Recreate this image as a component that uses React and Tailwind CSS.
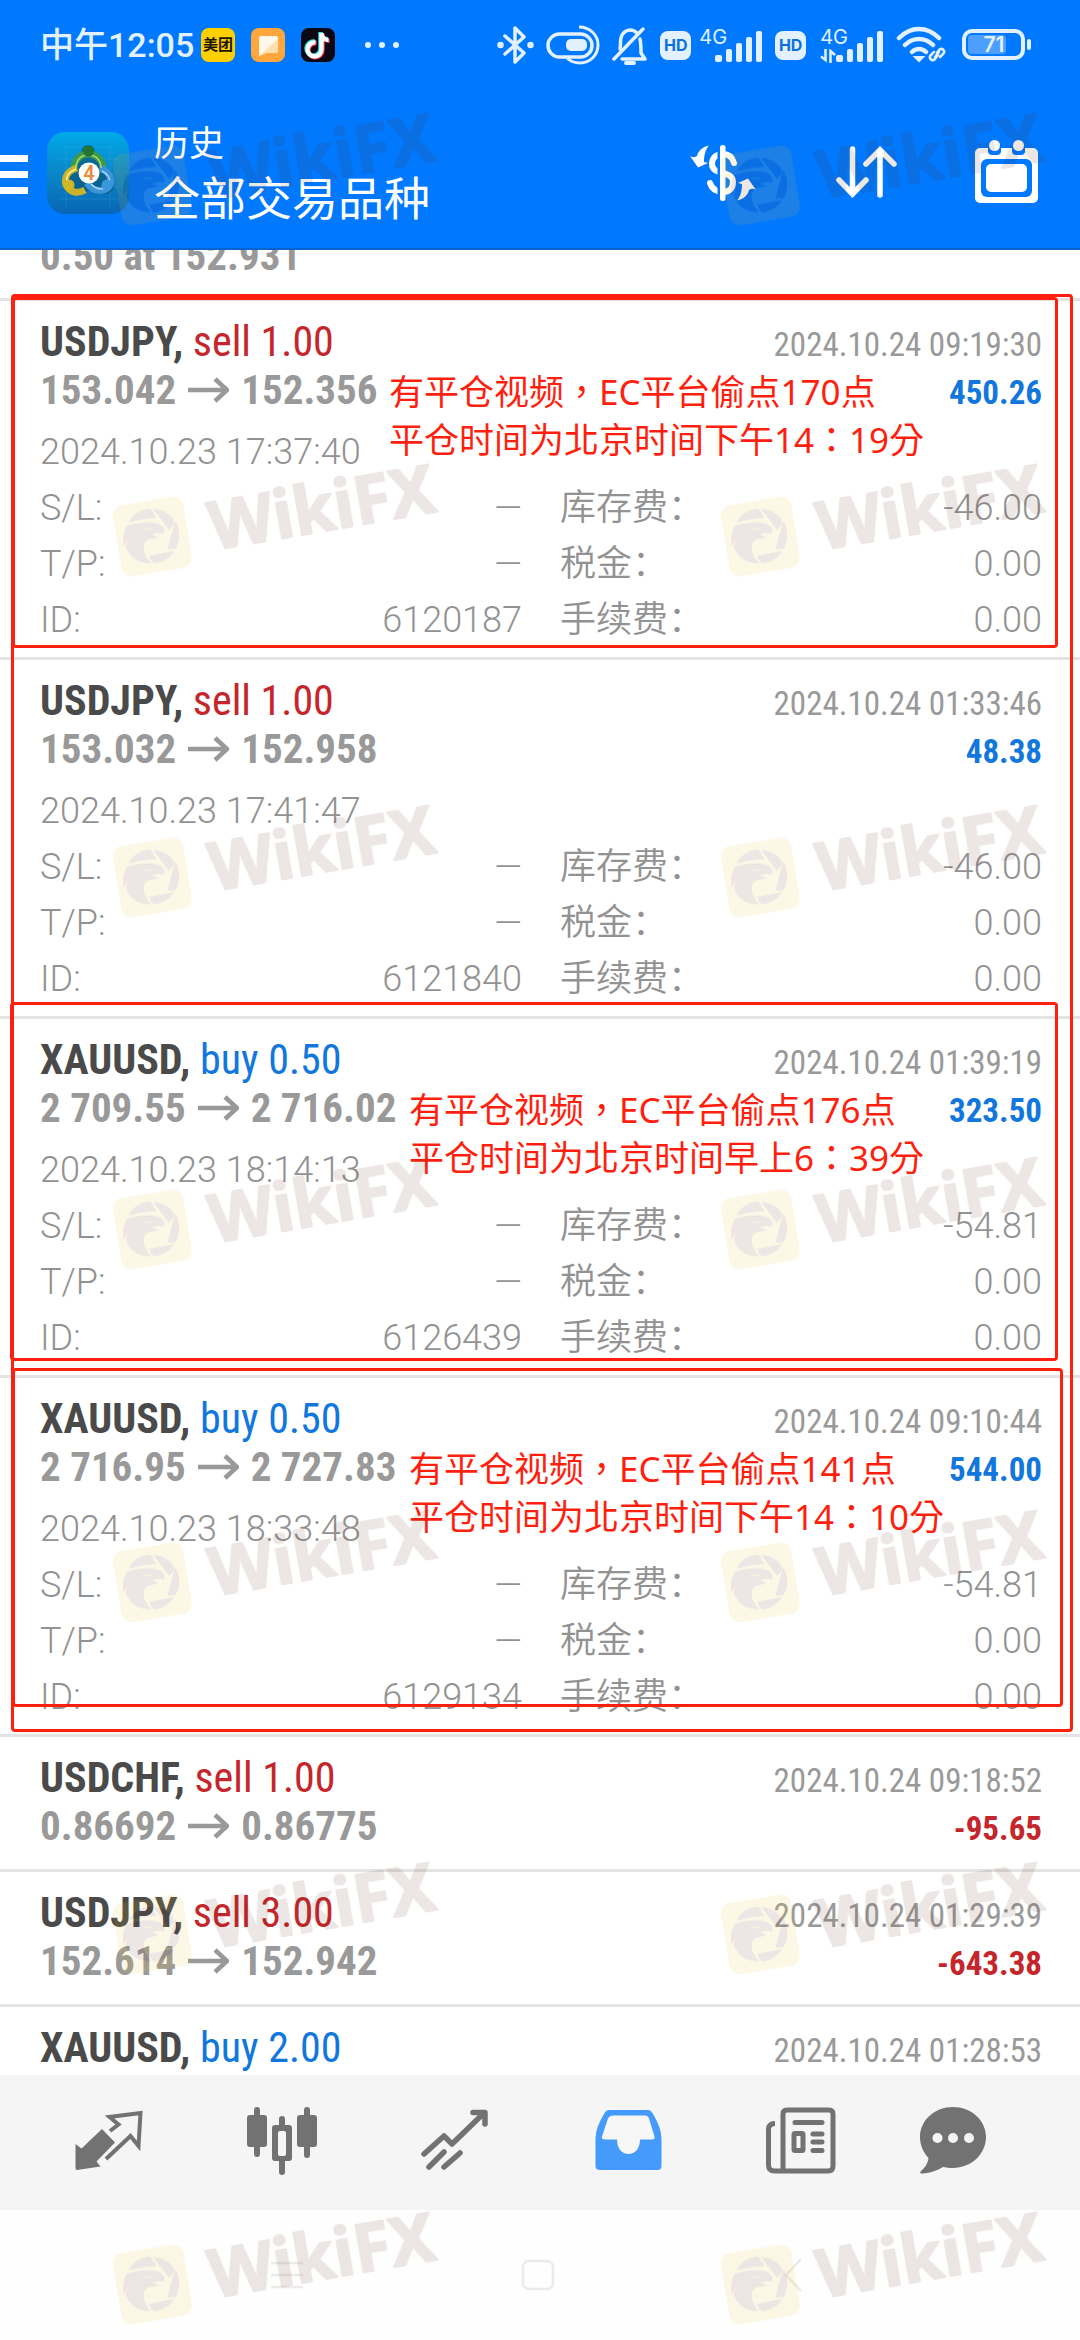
import clsx from 'clsx'

const deals = [
  {
    symbol: 'USDJPY', side: 'sell', volume: '1.00', open: '153.042', close: '152.356',
    closedAt: '2024.10.24 09:19:30', openedAt: '2024.10.23 17:37:40', profit: '450.26',
    swap: '-46.00', id: '6120187',
    note: ['有平仓视频，EC平台偷点170点', '平仓时间为北京时间下午14：19分'],
    noteClass: 'left-[389px]',
    frameClass: '-top-1 bottom-[9px] left-3 right-[22px]',
  },
  {
    symbol: 'USDJPY', side: 'sell', volume: '1.00', open: '153.032', close: '152.958',
    closedAt: '2024.10.24 01:33:46', openedAt: '2024.10.23 17:41:47', profit: '48.38',
    swap: '-46.00', id: '6121840',
  },
  {
    symbol: 'XAUUSD', side: 'buy', volume: '0.50', open: '2 709.55', close: '2 716.02',
    closedAt: '2024.10.24 01:39:19', openedAt: '2024.10.23 18:14:13', profit: '323.50',
    swap: '-54.81', id: '6126439',
    note: ['有平仓视频，EC平台偷点176点', '平仓时间为北京时间早上6：39分'],
    noteClass: 'left-[409px]',
    frameClass: '-top-[17px] bottom-[14px] left-[10px] right-[22px]',
  },
  {
    symbol: 'XAUUSD', side: 'buy', volume: '0.50', open: '2 716.95', close: '2 727.83',
    closedAt: '2024.10.24 09:10:44', openedAt: '2024.10.23 18:33:48', profit: '544.00',
    swap: '-54.81', id: '6129134',
    note: ['有平仓视频，EC平台偷点141点', '平仓时间为北京时间下午14：10分'],
    noteClass: 'left-[409px]',
    frameClass: '-top-[10px] bottom-[27px] left-3 right-[17px]',
  },
]

const shortDeals = [
  { symbol: 'USDCHF', side: 'sell', volume: '1.00', open: '0.86692', close: '0.86775', closedAt: '2024.10.24 09:18:52', profit: '-95.65' },
  { symbol: 'USDJPY', side: 'sell', volume: '3.00', open: '152.614', close: '152.942', closedAt: '2024.10.24 01:29:39', profit: '-643.38' },
  { symbol: 'XAUUSD', side: 'buy', volume: '2.00', closedAt: '2024.10.24 01:28:53' },
]

const watermarkRows = ['top-[109px]', 'top-[460px]', 'top-[801px]', 'top-[1153px]', 'top-[1506px]', 'top-[1858px]', 'top-[2208px]']

const narrow = "font-['Roboto_Condensed',Roboto,sans-serif]"

/* ---------- status bar ---------- */

function Signal() {
  return (
    <svg width="48" height="32" viewBox="0 0 48 32" fill="currentColor">
      <rect x="0" y="24" width="7" height="7" rx="2" />
      <rect x="11" y="18" width="6" height="13" rx="2" />
      <rect x="21" y="12" width="6" height="19" rx="2" />
      <rect x="31" y="6" width="6" height="25" rx="2" />
      <rect x="41" y="0" width="6" height="31" rx="2" />
    </svg>
  )
}

function Hd() {
  return (
    <span className="flex h-[29px] w-[31px] items-center justify-center rounded-lg bg-[#e3f1ff] font-['Inter',sans-serif] text-[16px] leading-none font-bold text-[#0a6fe0]">
      HD
    </span>
  )
}

function StatusBar() {
  return (
    <div className="flex h-[90px] items-center justify-between pr-12 pl-10 text-[#e3f1ff]">
      <div className="flex items-center">
        <span className="w-[161px] text-[34px] leading-10 font-medium whitespace-nowrap">中午12:05</span>
        <span className="flex size-[34px] items-center justify-center rounded-lg bg-[#ffd000] text-[15px] leading-none font-bold text-[#1b1500]">
          美团
        </span>
        <svg className="ml-4" width="34" height="34" viewBox="0 0 34 34">
          <rect width="34" height="34" rx="8" fill="#ffa63d" />
          <path d="M10 8h15a2 2 0 0 1 2 2v12a3 3 0 0 1-3 3H15l-7 3V10a2 2 0 0 1 2-2z" fill="#fff8ea" />
          <path d="M27 11v11a3 3 0 0 1-3 3H15l-7 3z" fill="#ffdfae" />
        </svg>
        <svg className="ml-4" width="34" height="34" viewBox="0 0 34 34" fill="none" strokeWidth="4.400">
          <rect width="34" height="34" rx="8" fill="#0b0a14" />
          <path d="M15 14.500a7 7 0 1 0 6 7V5c0 4 3 7 7 7" transform="translate(-1.500 -1)" stroke="#2de8e6" />
          <path d="M15 14.500a7 7 0 1 0 6 7V5c0 4 3 7 7 7" transform="translate(.5 .8)" stroke="#f5345f" />
          <path d="M15 14.500a7 7 0 1 0 6 7V5c0 4 3 7 7 7" transform="translate(-.5 0)" stroke="#fff" />
        </svg>
        <svg className="ml-[29px]" width="36" height="8" viewBox="0 0 36 8" fill="currentColor">
          <circle cx="4" cy="4" r="3" />
          <circle cx="18" cy="4" r="3" />
          <circle cx="32" cy="4" r="3" />
        </svg>
      </div>
      <div className="flex items-center">
        <svg width="37" height="40" viewBox="0 0 37 40" fill="none" stroke="currentColor" strokeWidth="3.500" strokeLinejoin="round" strokeLinecap="round">
          <path d="M8 11l19 17-9 9V3l9 9L8 29" />
          <circle cx="3.500" cy="20" r="1.500" />
          <circle cx="33.500" cy="20" r="1.500" />
        </svg>
        <svg className="ml-3" width="54" height="40" viewBox="0 0 54 40" fill="none" stroke="currentColor" strokeWidth="3.500">
          <rect x="2" y="9" width="44" height="23" rx="11.500" />
          <path d="M33 2c11 0 19 8 19 18s-8 18-18 18c-6 0-10-2-13-5" strokeWidth="3" />
          <rect x="20" y="14" width="21" height="12" rx="5" fill="currentColor" stroke="none" />
        </svg>
        <svg className="ml-3" width="36" height="40" viewBox="0 0 36 40" fill="none" stroke="currentColor" strokeWidth="3.500" strokeLinecap="round" strokeLinejoin="round">
          <path d="M8 24c1-5 0-8 1-11 1-5 5-8 9-8 3 0 5 1 7 3M28 14c1 5 1 10 1 14l4 6H10" />
          <path d="M2 34L31 4" />
          <path d="M14 38h8" strokeWidth="4" />
        </svg>
        <span className="w-3" />
        <Hd />
        <span className="ml-2 flex h-10 font-['Inter',sans-serif] text-[20px] leading-6">4G</span>
        <span className="-ml-3 mt-1"><Signal /></span>
        <span className="w-3" />
        <Hd />
        <span className="ml-[14px] flex h-10 flex-col font-['Inter',sans-serif] text-[20px] leading-6">
          4G
          <svg width="16" height="14" viewBox="0 0 16 14" fill="none" stroke="currentColor" strokeWidth="2.500">
            <path d="M5.500 0v11L1 7.500M10.500 14V2l4.500 4" />
          </svg>
        </span>
        <span className="-ml-3 mt-1"><Signal /></span>
        <svg className="ml-3" width="50" height="38" viewBox="0 0 50 38" fill="none" stroke="currentColor" strokeWidth="4.500" strokeLinecap="round">
          <path d="M3 12C15 0 31 0 43 12M9 19c8-8 20-8 28 0M16 26c4-4 10-4 14 0" />
          <path d="M19 31l4 4 4-4z" fill="currentColor" strokeWidth="2" />
          <path d="M41 27l2-3c3-3 7 1 4 4l-3 3M42 29l-3 4c-3 3-7-1-4-4l3-3M39 31l4-5" strokeWidth="2.500" />
        </svg>
        <svg className="ml-4" width="70" height="32" viewBox="0 0 70 32" fill="none">
          <rect x="2" y="2" width="59" height="27" rx="8" stroke="currentColor" strokeWidth="4" />
          <rect x="6" y="6" width="38" height="19" rx="4" fill="#4d9fff" />
          <rect x="65" y="10" width="4" height="11" rx="2" fill="currentColor" />
          <text x="32" y="23" fontSize="21" fontWeight="600" fontFamily="Inter, sans-serif" textAnchor="middle" fill="currentColor">71</text>
        </svg>
      </div>
    </div>
  )
}

/* ---------- header ---------- */

function AppLogo() {
  return (
    <svg width="84" height="84" viewBox="0 0 84 84">
      <defs>
        <linearGradient id="logoBg" x1="0" y1="0" x2="0" y2="1">
          <stop offset="0" stopColor="#00a9e8" />
          <stop offset="0.5" stopColor="#0a86c8" />
          <stop offset="1" stopColor="#0866b4" />
        </linearGradient>
      </defs>
      <rect x="1" y="1" width="82" height="82" rx="18" fill="url(#logoBg)" />
      <path d="M12 16h60M12 28h60M12 56h60M12 68h60M20 8v68M64 8v68" stroke="#3fb4e6" strokeOpacity="0.25" />
      <path d="M42 14c4 0 7 3 7 7 6 3 10 9 10 15 7 4 9 10 9 16 1 6-3 10-8 11-7 1-12-1-17-4-5 3-10 5-17 4-6-1-10-5-9-10 0-7 3-12 10-17 0-6 3-12 8-15 0-4 3-7 7-7z" fill="#0b4a66" fillOpacity="0.55" />
      <g fill="none" strokeWidth="7">
        <path d="M28 40c-1-10 6-17 14-17 9 0 16 7 15 17" stroke="#3f9a45" />
        <path d="M31 37c-10 3-13 10-11 17 4 8 12 9 19 5" stroke="#c9b22c" />
        <path d="M54 37c8 3 13 10 10 17-4 7-16 8-23-2" stroke="#3d93d6" />
      </g>
      <g fill="none" strokeWidth="1.500">
        <path d="M30 37c0-8 5-13 12-13 8 0 13 5 13 13" stroke="#a9dc74" />
        <path d="M30 38c-8 3-10 8-9 13" stroke="#fff08a" />
        <path d="M56 40c6 3 9 8 7 13-3 6-12 7-18 0" stroke="#a5dcff" />
      </g>
      <circle cx="42.500" cy="20" r="5.500" fill="#24752f" />
      <circle cx="23" cy="54" r="5.500" fill="#d0b726" />
      <circle cx="61" cy="54" r="5.500" fill="#3a97dc" />
      <circle cx="43" cy="42" r="10.500" fill="#fff" />
      <text x="43" y="49" fontSize="20" fontWeight="600" fontFamily="Roboto, sans-serif" textAnchor="middle" fill="#ee8a3c">4</text>
    </svg>
  )
}

function Header() {
  return (
    <header className="border-b-2 border-[#0d63cc] bg-[#0079ff] text-white">
      <StatusBar />
      <div className="flex h-[158px] items-start pt-[35px]">
        <button aria-label="menu" className="mt-[30px] flex w-7 flex-col gap-[9px]">
          <span className="h-[7px] bg-white" />
          <span className="h-[7px] bg-white" />
          <span className="h-[7px] bg-white" />
        </button>
        <span className="mt-[6px] ml-[18px]"><AppLogo /></span>
        <div className="-mt-1 ml-6 flex-1">
          <p className="text-[35px] leading-12">历史</p>
          <h1 className="text-[46px] leading-[60px]">全部交易品种</h1>
        </div>
        <button aria-label="deals" className="mt-[19px]">
          <svg width="68" height="58" viewBox="0 0 68 58" fill="#fff">
            <path d="M1 12C4 14 6 13 8 12 9 7 13 3 20 1.500 16 6 15 12 15 18L19 19 9 23.500Z" />
            <path d="M1 12C4 14 6 13 8 12 9 7 13 3 20 1.500 16 6 15 12 15 18L19 19 9 23.500Z" transform="rotate(180 34 29)" />
            <path d="M45 19C43 12 39 10 34 10c-7 0-11 4-11 10 0 12 21 6 21 18 0 7-4 10-10 10-7 0-11-3-13-9" fill="none" stroke="#fff" strokeWidth="6" strokeLinecap="round" />
            <rect x="28.500" y="0" width="2.500" height="58" fill="#0079ff" />
            <rect x="31" y="1" width="5.500" height="56" rx="2.500" />
          </svg>
        </button>
        <button aria-label="sort" className="mt-[21px] ml-[78px]">
          <svg width="62" height="52" viewBox="0 0 62 52" fill="none" stroke="#fff" strokeWidth="5.500" strokeLinecap="round">
            <path d="M17.500 3v45M4 34l13.500 14L31 34M45 49V4M31 18L45 4l14 14" />
          </svg>
        </button>
        <button aria-label="calendar" className="mt-[14px] mr-[41px] ml-[77px]">
          <svg width="65" height="65" viewBox="0 0 65 65" fill="#fff">
            <path d="M6 9h8v4a4 4 0 0 0 4 3h5a4 4 0 0 0 4-3V9h11v4a4 4 0 0 0 4 3h5a4 4 0 0 0 4-3V9h8a5 5 0 0 1 5 5v45a5 5 0 0 1-5 5H6a5 5 0 0 1-5-5V14a5 5 0 0 1 5-5z" />
            <rect x="7" y="20" width="51" height="38" rx="6" fill="#0079ff" />
            <rect x="12" y="25" width="41" height="28" rx="5" />
            <circle cx="20.500" cy="6.500" r="5.500" />
            <circle cx="44.500" cy="6.500" r="5.500" />
          </svg>
        </button>
      </div>
    </header>
  )
}

/* ---------- history list ---------- */

function Arrow() {
  return (
    <svg className="mx-3 inline-block" width="41" height="26" viewBox="0 0 41 26" fill="none" stroke="#999" strokeWidth="4.500">
      <path d="M0 13h39M27 2l12 11-12 11" />
    </svg>
  )
}

function Summary({ deal }) {
  return (
    <div className={clsx('pt-[17px] leading-12 whitespace-nowrap text-[#999]', narrow)}>
      <div className="flex h-12 items-baseline justify-between">
        <p className="text-[42px]">
          <b className="text-[#4a4a4a]">{deal.symbol},</b>{' '}
          <span className={deal.side === 'buy' ? 'text-[#1277dc]' : 'text-[#c5262b]'}>
            {deal.side} {deal.volume}
          </span>
        </p>
        <p className="text-[33px]">{deal.closedAt}</p>
      </div>
      {deal.open && (
        <div className="flex h-12 items-baseline justify-between font-bold">
          <p className="flex items-center text-[41px]">
            {deal.open}
            <Arrow />
            {deal.close}
          </p>
          <p className={clsx('text-[33px]', deal.profit.startsWith('-') ? 'text-[#c5262b]' : 'text-[#1277dc]')}>
            {deal.profit}
          </p>
        </div>
      )}
    </div>
  )
}

function Row({ label, value }) {
  return (
    <div className="flex h-14 justify-between leading-14">
      <dt>{label}</dt>
      <dd>{value}</dd>
    </div>
  )
}

function Deal({ deal }) {
  return (
    <li className="relative border-t-[3px] border-[#e3e3e3] pr-[38px] pb-[9px] pl-10">
      <Summary deal={deal} />
      <div className="mt-[10px] text-[36px] font-[350] text-[#929292]">
        <p className="h-14 leading-14">{deal.openedAt}</p>
        <dl className="grid grid-cols-2 gap-x-[38px]">
          <Row label="S/L:" value="—" />
          <Row label="库存费：" value={deal.swap} />
          <Row label="T/P:" value="—" />
          <Row label="税金：" value="0.00" />
          <Row label="ID:" value={deal.id} />
          <Row label="手续费：" value="0.00" />
        </dl>
      </div>
      {deal.note && (
        <>
          <div className={clsx('absolute rounded-sm border-[3px] border-[#ff1f0f]', deal.frameClass)} />
          <div className={clsx("absolute top-[67px] font-['Noto_Sans','Noto_Sans_CJK_TC',sans-serif] text-[35px] leading-12 whitespace-nowrap text-[#ff1f0f]", deal.noteClass)}>
            {deal.note.map((line) => <p key={line} className="h-12">{line}</p>)}
          </div>
        </>
      )}
    </li>
  )
}

function History() {
  return (
    <main className="flex-1 overflow-hidden bg-white">
      <p className={clsx('-mt-[18px] h-[66px] pl-10 text-[41px] leading-12 font-bold text-[#999]', narrow)}>0.50 at 152.931</p>
      <div className="relative">
        <ul>
          {deals.map((deal) => <Deal key={deal.id} deal={deal} />)}
        </ul>
        <div className="absolute -top-1 right-[7px] bottom-[2px] left-[11px] rounded-sm border-[3px] border-[#ff1f0f]" />
      </div>
      <ul>
        {shortDeals.map((deal) => (
          <li key={deal.closedAt} className="h-[135px] border-t-[3px] border-[#e3e3e3] pr-[38px] pl-10">
            <Summary deal={deal} />
          </li>
        ))}
      </ul>
    </main>
  )
}

/* ---------- bottom tabs ---------- */

function Tabs() {
  return (
    <nav className="grid h-[135px] shrink-0 grid-cols-[repeat(5,4fr)_3fr] items-start justify-items-center bg-[#f5f5f6] pt-8 pr-[62px] pl-[22px] text-[#727272]">
      <button aria-label="quotes">
        <svg width="70" height="68" viewBox="0 -4 70 68">
          <path d="M1.500 33l6 4.500L28 18l13 13.500-18.500 19 4 5L3 59q-1.500 0-1.500-2z" fill="currentColor" />
          <path d="M36 20l8.500-6.500L35.500 6l31-4-2 33-8-10L32 48" fill="none" stroke="currentColor" strokeWidth="4" />
        </svg>
      </button>
      <button aria-label="chart">
        <svg width="70" height="68" viewBox="0 0 70 68" fill="currentColor">
          <rect y="8" width="20" height="32" rx="3" />
          <rect x="7" width="6" height="50" rx="3" />
          <rect x="50" y="8" width="20" height="32" rx="3" />
          <rect x="57" width="6" height="51" rx="3" />
          <rect x="32" y="9" width="6" height="59" rx="3" />
          <rect x="25" y="18" width="20" height="36" rx="3" />
          <rect x="31" y="24" width="8" height="25" rx="2" fill="#f5f5f6" />
        </svg>
      </button>
      <button aria-label="trade">
        <svg width="68" height="68" viewBox="0 -2 68 68" fill="none" stroke="currentColor" strokeWidth="5.500" strokeLinecap="round" strokeLinejoin="round">
          <path d="M3 45l20-18 8 8L63 4M52 3.500h12V15M8 58l15-15M23 58l16-14" />
        </svg>
      </button>
      <button aria-label="history">
        <svg width="67" height="68" viewBox="0 -2 67 68">
          <path fillRule="evenodd" fill="#459bfb" d="M14 1h39q3 0 5 4 8 13 8.500 24v28q0 4-4 4H5q-4.500 0-4.500-4V29Q1 18 9 5q2-4 5-4z" />
          <path fill="#f8f7f7" d="M18 6.500h32q3 0 4 3l5.500 18q.5 3-2 3H45c0 9-5 14.500-11.500 14.500S22 39.500 22 30.500H10q-4 0-3-3l6-18q1.500-3 5-3z" />
        </svg>
      </button>
      <button aria-label="news">
        <svg width="70" height="68" viewBox="0 0 70 68" fill="none" stroke="currentColor" strokeWidth="5">
          <path d="M9 16.500q-6.500 0-6.500 6V58q0 6 6 6H62q5 0 5-5V7q0-4-4-4H21q-4 0-4 4v56" />
          <path d="M29 15.500h27M47 27h9M47 35h9M47 43.500h9" strokeLinecap="round" />
          <rect x="28" y="26.500" width="9" height="17" rx="1" />
        </svg>
      </button>
      <button aria-label="messages">
        <svg width="67" height="68" viewBox="0 0 67 68" fill="currentColor">
          <path d="M33 0c18 0 33 13 33 30S51 61 33 61c-4 0-7-.5-10-1C16 64 9 66.500 1 66.500 0 66 0 65 1 64c5-4 7-9 7.500-13C3 45 0 38 0 30 0 13 15 0 33 0z" />
          <g fill="#f5f5f6">
            <circle cx="17.500" cy="31" r="5" />
            <circle cx="33" cy="31" r="5" />
            <circle cx="49" cy="31" r="5" />
          </g>
        </svg>
      </button>
    </nav>
  )
}

function SystemBar() {
  return (
    <div className="flex h-[130px] shrink-0 items-start justify-between bg-[#fefefe] pt-12 pr-[276px] pl-[271px] text-[#ebebeb]">
      <svg width="32" height="34" viewBox="0 0 32 34" stroke="currentColor" strokeWidth="2.500">
        <path d="M0 5h32M0 17h32M0 29h32" />
      </svg>
      <svg width="34" height="34" viewBox="0 0 34 34" fill="none" stroke="currentColor" strokeWidth="2.500">
        <rect x="2" y="3" width="30" height="28" rx="6" />
      </svg>
      <svg width="32" height="34" viewBox="0 0 32 34" fill="none" stroke="currentColor" strokeWidth="2.500">
        <path d="M29 1L14 17l15 16" />
      </svg>
    </div>
  )
}

/* ---------- watermark ---------- */

function Watermark() {
  return (
    <svg className="overflow-visible" width="340" height="152" viewBox="0 -36 1020 456" aria-hidden="true">
      <g opacity="0.12">
        <rect x="50" y="121" width="214" height="216" rx="30" fill="#eebc2f" transform="rotate(-9.500 157 229)" />
        <g fill="#613020" transform="translate(12 78)">
          <path d="M74 109C86 84 110 69 140 68l17 28c-28 2-55 6-83 13z" />
          <path d="M149 69c24 1 45 13 58 30l4 15-16 18-46-61z" />
          <path d="M214 105c16 27 15 58 1 84l-24 2c6-29 14-58 23-86z" />
          <path d="M211 195c-14 22-36 35-61 37-7-5-12-14-14-23z" />
          <path d="M68 120c25-9 49-12 78-11 17 1 31 10 35 21 2 8-1 12-3 13-12-4-22-3-34 3 8 4 14 5 22 6-9 6-22 5-29 7-12 4-18 14-18 25 0 18 10 35 23 47-35 3-61-14-73-41l-4-8 6-18c-8 7-10 13-11 20-5-22-3-45 8-64z" />
          <path d="M120 127q12 8 24 3" fill="none" stroke="#eebc2f" strokeWidth="3" />
        </g>
        <text
          transform="translate(340 271) rotate(-9.800)"
          fontSize="201"
          fontWeight="700"
          fontFamily="Noto Sans, sans-serif"
          fill="#613020"
          stroke="#613020"
          strokeWidth="6"
          strokeLinejoin="round"
        >
          WikiFX
        </text>
      </g>
    </svg>
  )
}

export default function App() {
  return (
    <div className="relative flex h-screen flex-col overflow-hidden bg-white font-[Roboto,'Noto_Sans_CJK_SC',sans-serif]">
      <Header />
      <History />
      <Tabs />
      <SystemBar />
      <div className="pointer-events-none absolute inset-0 overflow-hidden">
        {watermarkRows.map((top) => (
          <div key={top} className={clsx('absolute left-[100px] flex w-[948px] -translate-y-3 justify-between', top)}>
            <Watermark />
            <Watermark />
          </div>
        ))}
      </div>
    </div>
  )
}
